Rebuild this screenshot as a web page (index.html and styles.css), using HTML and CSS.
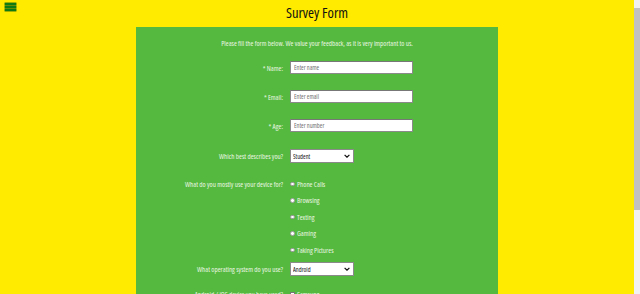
FILE: index.html
```html
<!DOCTYPE html>
<html lang="en">
<head>
<meta charset="utf-8">
<title>Survey Form</title>
<link rel="stylesheet" href="styles.css">
</head>
<body>
<header class="top">
  <button class="menu" aria-label="Menu">
    <span class="bar"></span><span class="bar"></span><span class="bar"></span>
  </button>
  <h1 class="title">Survey Form</h1>
  <span></span>
</header>
<main class="card">
  <p class="intro">Please fill the form below. We value your feedback, as it is very important to us.</p>
  <form class="form">
    <div class="row r-first">
      <label class="lbl" for="name">* Name:</label>
      <input class="field" id="name" type="text" placeholder="Enter name">
    </div>
    <div class="row">
      <label class="lbl" for="email">* Email:</label>
      <input class="field" id="email" type="email" placeholder="Enter email">
    </div>
    <div class="row">
      <label class="lbl" for="age">* Age:</label>
      <input class="field" id="age" type="number" placeholder="Enter number">
    </div>
    <div class="row r-select">
      <label class="lbl" for="role">Which best describes you?</label>
      <div class="sel">
        <select id="role"><option>Student</option><option>Professional</option></select>
        <svg class="chev" viewBox="0 0 10 6" width="6" height="4"><path d="M1 1l4 4 4-4" fill="none" stroke="#111" stroke-width="2"/></svg>
      </div>
    </div>
    <div class="row r-radio">
      <span class="lbl">What do you mostly use your device for?</span>
      <ul class="opts">
        <li><label><span class="dot"></span><span>Phone Calls</span></label></li>
        <li><label><span class="dot"></span><span>Browsing</span></label></li>
        <li><label><span class="dot"></span><span>Texting</span></label></li>
        <li><label><span class="dot"></span><span>Gaming</span></label></li>
        <li><label><span class="dot"></span><span>Taking Pictures</span></label></li>
      </ul>
    </div>
    <div class="row r-os">
      <label class="lbl" for="os">What operating system do you use?</label>
      <div class="sel">
        <select id="os"><option>Android</option><option>iOS</option></select>
        <svg class="chev" viewBox="0 0 10 6" width="6" height="4"><path d="M1 1l4 4 4-4" fill="none" stroke="#111" stroke-width="2"/></svg>
      </div>
    </div>
    <div class="row r-check">
      <span class="lbl">Android / iOS device you have used?</span>
      <ul class="opts">
        <li><label><span class="box"></span><span>Samsung</span></label></li>
        <li><label><span class="box"></span><span>Apple</span></label></li>
      </ul>
    </div>
  </form>
</main>
<div class="scrollbar" aria-hidden="true"><span class="thumb"></span></div>
</body>
</html>
```
FILE: styles.css
```css
body {
  margin: 0 6px 0 0;
  background: #ffeb00;
  font-family: "Open Sans", "Liberation Sans", sans-serif;
  font-stretch: 75%;
  color: #eaf6e2;
}
.top {
  display: grid;
  grid-template-columns: 1fr auto 1fr;
  align-items: start;
  height: 27px;
}
.menu {
  display: flex;
  flex-direction: column;
  gap: 1.3px;
  width: 11px;
  margin: 3px 0 0 5px;
  padding: 0;
  border: 0;
  background: none;
}
.bar {
  display: block;
  height: 1.8px;
  background: #0f7a12;
  box-shadow: 0 0 0 0.4px #0a5a0c;
}
.title {
  margin: 4px 0 0;
  font-size: 14.5px;
  line-height: 18px;
  font-weight: normal;
  color: #111;
}
.card {
  width: 362px;
  margin: 0 auto;
  padding: 10px 0 20px;
  background: #55b93f;
}
.intro {
  margin: 0;
  text-align: center;
  font-size: 7.05px;
  line-height: 12px;
}
.form {
  display: flex;
  flex-direction: column;
}
.row {
  display: grid;
  grid-template-columns: 147px 1fr;
  column-gap: 7px;
  align-items: center;
  margin-top: 16px;
  font-size: 7.1px;
  line-height: 10px;
}
.r-first { margin-top: 12px; }
.r-select { margin-top: 17px; }
.r-radio { margin-top: 12.5px; align-items: start; }
.r-radio .lbl,
.r-check .lbl { line-height: 16.5px; }
.r-os { margin-top: 4px; }
.r-check { margin-top: 9.5px; align-items: start; }
.lbl {
  text-align: right;
}
.field {
  box-sizing: border-box;
  width: 123px;
  height: 13px;
  margin: 0;
  padding: 0 3px;
  border: 1px solid #8a8a8a;
  border-top-color: #777;
  background: #fff;
  font-family: inherit;
  font-stretch: 75%;
  font-size: 6.4px;
  color: #222;
  outline: none;
}
.field::placeholder {
  color: #707070;
}
.sel {
  position: relative;
  width: 64px;
}
.sel select {
  -webkit-appearance: none;
  appearance: none;
  box-sizing: border-box;
  display: block;
  width: 64px;
  height: 14px;
  margin: 0;
  padding: 0 2px;
  border: 1px solid #8a8a8a;
  border-radius: 0;
  background: #fff;
  font-family: inherit;
  font-stretch: 75%;
  font-size: 6.4px;
  color: #111;
}
.chev {
  position: absolute;
  right: 4px;
  top: 5px;
}
.opts {
  list-style: none;
  margin: 0;
  padding: 0;
}
.opts li {
  height: 16.5px;
  display: flex;
  align-items: center;
}
.opts label {
  display: flex;
  align-items: center;
  gap: 2.5px;
}
.dot {
  box-sizing: border-box;
  width: 4.5px;
  height: 4.5px;
  border-radius: 50%;
  background: #fff;
  border: 0.5px solid #9a9a9a;
}
.box {
  box-sizing: border-box;
  width: 4.5px;
  height: 4.5px;
  background: #fff;
  border: 0.5px solid #777;
}
.scrollbar {
  position: fixed;
  top: 0;
  right: 0;
  bottom: 0;
  width: 6px;
  background: #f1f1f1;
}
.thumb {
  position: absolute;
  top: 8px;
  left: 0;
  right: 0;
  height: 202px;
  background: #c1c1c1;
}
```
